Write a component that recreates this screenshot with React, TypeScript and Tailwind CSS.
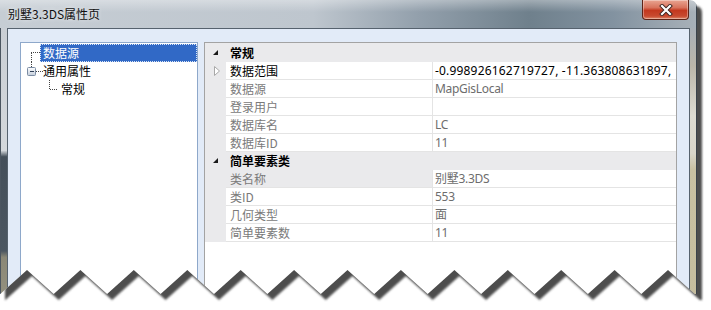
import React from "react";

const CJK = "font-['Noto_Sans_CJK_SC',sans-serif]";
const VAL = "font-['Noto_Sans','Noto_Sans_CJK_SC',sans-serif]";

type Row = { label: string; value: string; dark?: boolean; expand?: boolean; selected?: boolean };

const section1: Row[] = [
  { label: "数据范围", value: "-0.998926162719727, -11.363808631897,", dark: true, expand: true },
  { label: "数据源", value: "MapGisLocal" },
  { label: "登录用户", value: "" },
  { label: "数据库名", value: "LC" },
  { label: "数据库ID", value: "11" },
];

const section2: Row[] = [
  { label: "类名称", value: "别墅3.3DS", selected: true },
  { label: "类ID", value: "553" },
  { label: "几何类型", value: "面" },
  { label: "简单要素数", value: "11" },
];

function Header({ title, tall }: { title: string; tall?: boolean }) {
  return (
    <div className={`flex items-center bg-[#eaeaec] ${tall ? "h-[19px]" : "h-[18px]"}`}>
      <div className="w-[21px] h-full flex items-center pl-[8px] shrink-0">
        <svg width={6} height={6} className="block">
          <polygon points="5,0 5,5 0,5" fill="#1a1a1a" />
        </svg>
      </div>
      <span className={`${CJK} text-[12px] leading-none font-bold text-black pl-[4px]`}>{title}</span>
    </div>
  );
}

function PropRow({ r }: { r: Row }) {
  return (
    <div className="flex h-[18px]">
      <div className="w-[21px] h-full bg-[#eaeaec] shrink-0 flex items-center pl-[9px]">
        {r.expand && (
          <svg width={7} height={10} className="block">
            <polygon points="0.5,0.5 5.5,5 0.5,9.5" fill="#fff" stroke="#a8a8a8" />
          </svg>
        )}
      </div>
      <div
        className={`w-[207px] h-full shrink-0 border-r border-b border-[#e4e4e4] flex items-center pl-[4px] ${CJK} text-[12px] leading-none ${
          r.selected ? "bg-[#eaeaec]" : "bg-white"
        } ${r.dark ? "text-black" : "text-[#7a7a7a]"}`}
      >
        {r.label}
      </div>
      <div
        className={`flex-1 h-full border-b border-[#e4e4e4] flex items-center pl-[2px] overflow-hidden whitespace-nowrap ${VAL} text-[12px] leading-none ${
          r.dark ? "text-black tracking-[0.18px]" : "text-[#6d6d6d] tracking-[-0.3px]"
        }`}
      >
        {r.value}
      </div>
    </div>
  );
}

function Tree() {
  return (
    <div className="w-[178px] h-[300px] bg-white border border-[#8ea8ca] pt-[1px] shrink-0">
      <div className="flex h-[18px]">
        <svg width={19} height={18} className="block shrink-0">
          <path d="M10 8.5 H19 M10.5 9 V18" stroke="#444" strokeDasharray="1 1" fill="none" shapeRendering="crispEdges" />
        </svg>
        <div className={`flex-1 bg-[#3169c6] text-white border border-dotted border-[#d8e4f6] pl-[2px] flex items-center ${CJK} text-[12px] leading-none`}>
          数据源
        </div>
      </div>
      <div className="flex h-[18px]">
        <div className="w-[22px] h-[18px] shrink-0">
          <svg width={22} height={18} className="block">
            <path d="M10.5 0 V5 M15 9.5 H22" stroke="#444" strokeDasharray="1 1" fill="none" shapeRendering="crispEdges" />
            <defs>
              <linearGradient id="exp" x1="0" y1="0" x2="0" y2="1">
                <stop offset="0" stopColor="#ffffff" />
                <stop offset="1" stopColor="#c3cddb" />
              </linearGradient>
            </defs>
            <rect x={6.5} y={5.5} width={8} height={8} rx={1} fill="url(#exp)" stroke="#7b8ca3" />
            <path d="M8.5 9.5 H12.5" stroke="#2e3f57" shapeRendering="crispEdges" />
          </svg>
        </div>
        <div className={`flex items-center ${CJK} text-[12px] leading-none text-black`}>通用属性</div>
      </div>
      <div className="flex h-[18px]">
        <svg width={40} height={18} className="block shrink-0">
          <path d="M28.5 0 V9 M29 9.5 H37" stroke="#444" strokeDasharray="1 1" fill="none" shapeRendering="crispEdges" />
        </svg>
        <div className={`flex items-center ${CJK} text-[12px] leading-none text-black`}>常规</div>
      </div>
    </div>
  );
}

function Grid() {
  return (
    <div className="w-[473px] h-[300px] bg-white border border-[#a3a3a3] shrink-0 flex flex-col">
      <Header title="常规" tall />
      {section1.map((r) => (
        <PropRow key={r.label} r={r} />
      ))}
      <Header title="简单要素类" />
      {section2.map((r) => (
        <PropRow key={r.label} r={r} />
      ))}
    </div>
  );
}

function TornEdge() {
  const pts: [number, number][] = [];
  for (let k = 0; k <= 13; k++) {
    pts.push([0.3 + 53.42 * k, 294]);
    if (k < 13) pts.push([27 + 53.42 * k, 270]);
  }
  const rev = [...pts]
    .reverse()
    .map(([x, y]) => `L${x.toFixed(1)},${y}`)
    .join(" ");
  const paper = `M0,0 L690,0 Q697,0 697,7 L697,294 ${rev} L0,294 Z`;
  const outside = `M-30,-30 L741,-30 L741,340 L-30,340 Z ${paper}`;
  return (
    <svg className="absolute left-0 top-0 pointer-events-none" width={711} height={310} viewBox="0 0 711 310">
      <defs>
        <clipPath id="outside">
          <path d={outside} clipRule="evenodd" />
        </clipPath>
        <filter id="blur" x="-5%" y="-5%" width="110%" height="110%">
          <feGaussianBlur stdDeviation="1.1" />
        </filter>
      </defs>
      <path d={outside} fill="#ffffff" fillRule="evenodd" />
      <g clipPath="url(#outside)">
        <path d={paper} transform="translate(5,6)" fill="#4d4d4d" filter="url(#blur)" />
      </g>
    </svg>
  );
}

export default function App() {
  return (
    <div className="relative w-[711px] h-[310px] overflow-hidden bg-white">
      <div className="flex flex-col w-[697px] h-[310px] rounded-tr-[7px] overflow-hidden">
        <div className="relative h-[28px] shrink-0 flex items-center pl-[8px] bg-[linear-gradient(to_right,#c6cdd4_0%,#bec6ce_45%,#93a0ac_60%,#6f808c_76%,#8292a0_88%,#a8b1b9_100%)] border-r border-[#39434d]">
          <div className="absolute inset-x-0 top-0 h-[12px] bg-[linear-gradient(to_bottom,rgba(255,255,255,0.35),rgba(255,255,255,0))]" />
          <span className={`relative ${CJK} text-[12px] leading-none text-[#101010] [text-shadow:0_0_4px_rgba(255,255,255,0.8)]`}>
            别墅3.3DS属性页
          </span>
          <div className="absolute right-[7px] top-0 w-[47px] h-[20px] rounded-b-[4px] border border-t-0 border-[#5e2418] bg-[linear-gradient(to_bottom,#e9a592_0%,#d8735d_40%,#c3381f_55%,#c84a30_85%,#df8a6c_100%)] flex items-center justify-center shadow-[0_0_0_1px_rgba(255,255,255,0.35)_inset]">
            <svg width={14} height={12} className="block">
              <path d="M3 2 L11 10 M11 2 L3 10" stroke="#3b2420" strokeWidth={4} strokeLinecap="square" />
              <path d="M3 2 L11 10 M11 2 L3 10" stroke="#ffffff" strokeWidth={2.2} strokeLinecap="square" />
            </svg>
          </div>
        </div>
        <div className="flex flex-1">
          <div className="w-[7px] shrink-0 border-l border-[#4b5560] bg-[linear-gradient(to_bottom,#c9ced4_0%,#d4d8dc_39%,#444f5a_41%,#4b5661_71%,#8a8776_73%,#a09d8a_100%)]" />
          <div className="flex-1 bg-[#e2ebf8] border border-b-0 border-[#56626e] flex gap-[6px] pl-[12px] pr-[12px] pt-[13px]">
            <Tree />
            <Grid />
          </div>
          <div className="w-[7px] shrink-0 border-r border-[#3a424a] bg-[linear-gradient(to_bottom,#a9b0b7_0%,#bbb6a9_12%,#dedcd2_28%,#d9d6ca_40%,#c9c1a2_45%,#c5bd9e_88%,#8e949a_100%)]" />
        </div>
      </div>
      <TornEdge />
    </div>
  );
}
